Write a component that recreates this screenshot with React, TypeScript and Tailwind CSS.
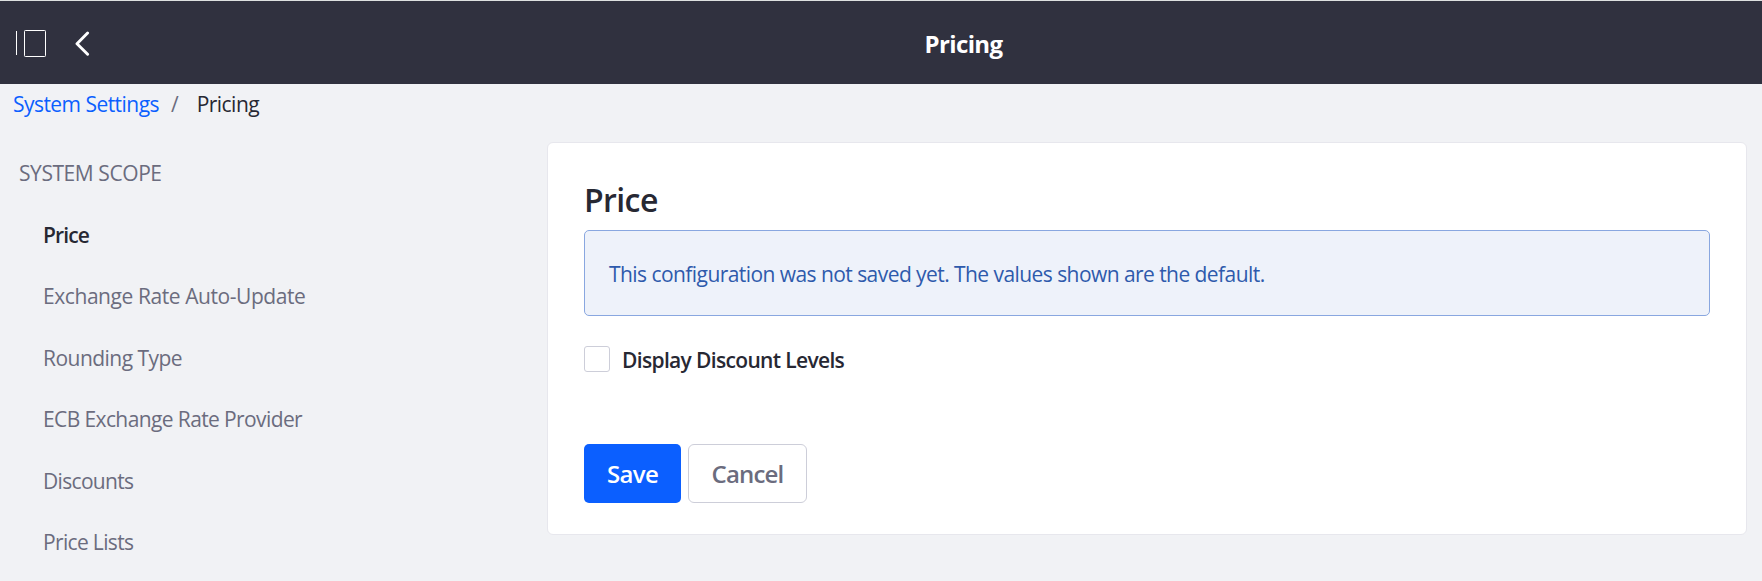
import type { ReactNode } from "react";

type NavItem = { label: string; spacing: string; active?: boolean };

const navItems: NavItem[] = [
  { label: "Price", spacing: "tracking-[-0.9px]", active: true },
  { label: "Exchange Rate Auto-Update", spacing: "tracking-[-0.43px]" },
  { label: "Rounding Type", spacing: "tracking-[-0.53px]" },
  { label: "ECB Exchange Rate Provider", spacing: "tracking-[-0.61px]" },
  { label: "Discounts", spacing: "tracking-[-0.68px]" },
  { label: "Price Lists", spacing: "tracking-[-0.66px]" },
];

function ControlBar() {
  return (
    <header className="flex h-[84px] items-center border-t border-[#dde0e0] bg-[#30313f] text-white">
      <div className="flex w-[165px] items-center pt-0.5 pl-4">
        <button type="button" aria-label="Toggle menu">
          <svg width="30" height="27" viewBox="0 0 30 27" fill="none" stroke="currentColor" className="block">
            <path d="M0.5 1v24" />
            <rect x="8.5" y="0.5" width="21" height="26" rx="0.8" />
          </svg>
        </button>
        <button type="button" aria-label="Back" className="ml-[29px]">
          <svg width="15" height="25" viewBox="0 0 15 25" fill="none" stroke="currentColor" strokeWidth="2.9" strokeLinecap="round" strokeLinejoin="round" className="block">
            <path d="M12.6 2 2 12.7l10.6 10.6" />
          </svg>
        </button>
      </div>
      <h1 className="flex-1 pt-[3px] text-center text-[24px] font-bold tracking-[-0.62px]">Pricing</h1>
    </header>
  );
}

function Breadcrumb() {
  return (
    <nav className="flex h-[38px] items-center pl-[13px] leading-[40px]">
      <a href="#" className="pt-0.5 tracking-[-0.54px] text-[#0b5fff]">System Settings</a>
      <span className="ml-[12px] pt-0.5 text-[#6b6c7e]">/</span>
      <span className="ml-[18px] pt-0.5 tracking-[-0.54px]">Pricing</span>
    </nav>
  );
}

function Sidebar() {
  return (
    <aside className="w-[547px] shrink-0 pt-px">
      <div className="h-[61.5px] pl-[19px] leading-[61.5px] tracking-[-0.43px] text-[#6b6c7e]">SYSTEM SCOPE</div>
      <ul className="pl-[43px]">
        {navItems.map(({ label, spacing, active }) => (
          <li key={label} className={`h-[61.5px] leading-[61.5px] ${spacing} ${active ? "font-semibold text-[#272833]" : "text-[#6b6c7e]"}`}>
            {label}
          </li>
        ))}
      </ul>
    </aside>
  );
}

function Alert({ children }: { children: ReactNode }) {
  return (
    <div className="flex h-[86px] items-center rounded-[5px] border border-[#89a7e0] bg-[#eef2fa] pt-1 pl-6 tracking-[-0.56px] text-[#2e5aac]">
      {children}
    </div>
  );
}

export default function App() {
  return (
    <div className="h-[581px] overflow-hidden bg-[#f1f2f5] font-['Open_Sans',sans-serif] text-[21px] text-[#272833]">
      <ControlBar />
      <Breadcrumb />
      <div className="mt-5 flex">
        <Sidebar />
        <main className="h-[393px] w-[1200px] rounded-[6px] border border-[#e7e7ed] bg-white px-9">
          <h2 className="mt-9 h-[51px] text-[32px] leading-[42px] font-semibold tracking-[-0.6px]">Price</h2>
          <Alert>This configuration was not saved yet. The values shown are the default.</Alert>
          <label className="mt-[30px] flex h-[26px] items-center">
            <span className="h-[26px] w-[26px] rounded-[3px] border border-[#cdced9] bg-white" />
            <span className="ml-[12px] pt-1 font-semibold tracking-[-0.66px]">Display Discount Levels</span>
          </label>
          <div className="mt-[72px] flex gap-[7px]">
            <button type="button" className="h-[59px] w-[97px] rounded-[5px] bg-[#0b5fff] text-[24px] font-semibold tracking-[-0.65px] text-white">
              Save
            </button>
            <button type="button" className="h-[59px] w-[119px] rounded-[6px] border border-[#cdced9] bg-white text-[24px] font-semibold tracking-[-0.82px] text-[#6b6c7e]">
              Cancel
            </button>
          </div>
        </main>
      </div>
    </div>
  );
}
